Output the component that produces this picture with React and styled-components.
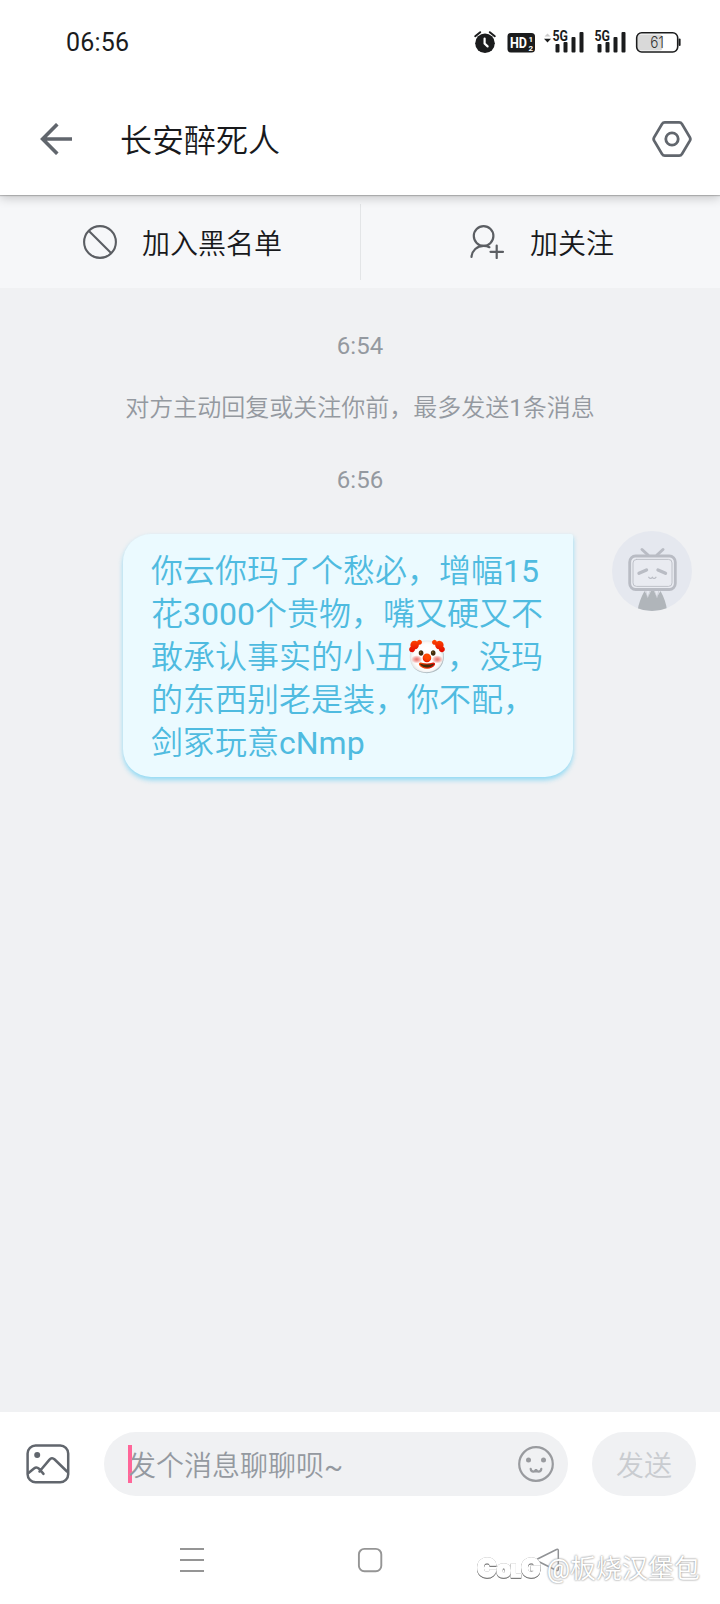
import React from 'react';
import styled, { createGlobalStyle } from 'styled-components';

const lines = [
  '你云你玛了个愁必，增幅15',
  '花3000个贵物，嘴又硬又不',
  '敢承认事实的小丑🤡，没玛',
  '的东西别老是装，你不配，',
  '剑冢玩意cNmp'
];

const StatusIcons = () => (
  <svg width='210' height='30' viewBox='0 0 210 30'>
    <g fill='#1b1c1d'>
      <circle cx='13' cy='17.3' r='9.8' />
      <path
        d='M3.2 10.2l5-4M22.8 10.2l-5-4'
        stroke='#1b1c1d'
        strokeWidth='2'
        strokeLinecap='round'
      />
      <path
        d='M12.6 12.6v5l3 2.8'
        stroke='#fff'
        strokeWidth='2.2'
        fill='none'
        strokeLinecap='round'
      />
      <rect x='35.5' y='7' width='27.5' height='19.5' rx='3.5' />
      <path d='M72.5 10.5l3-3 3 3z' fill='#ccc' />
      <path d='M72 12.8h7l-3.5 3.6z' />
      <rect x='83.5' y='18' width='4' height='8.5' rx='1' />
      <rect x='91.5' y='16' width='4' height='10.5' rx='1' />
      <rect x='99.5' y='11' width='4' height='15.5' rx='1' />
      <rect x='107.5' y='6' width='4' height='20.5' rx='1' />
      <rect x='125.5' y='18' width='4' height='8.5' rx='1' />
      <rect x='133.5' y='16' width='4' height='10.5' rx='1' />
      <rect x='141.5' y='11' width='4' height='15.5' rx='1' />
      <rect x='149.5' y='6' width='4' height='20.5' rx='1' />
      <rect x='206.6' y='12.4' width='2' height='7.5' rx='1' />
    </g>
    <rect x='165.5' y='8.5' width='25' height='16' rx='3' fill='#d9d9d9' />
    <rect
      x='164.7'
      y='6.8'
      width='41'
      height='19.2'
      rx='5'
      fill='none'
      stroke='#1b1c1d'
      strokeWidth='1.6'
    />
    <g fontFamily='Roboto' fontWeight='700'>
      <text
        x='38'
        y='22'
        fontSize='15.5'
        fill='#fff'
        textLength='17'
        lengthAdjust='spacingAndGlyphs'
      >
        HD
      </text>
      <text x='56.5' y='15.6' fontSize='8' fill='#fff'>
        1
      </text>
      <text x='56.5' y='25' fontSize='8' fill='#fff'>
        2
      </text>
      <text
        x='80.5'
        y='15'
        fontSize='14'
        fill='#1b1c1d'
        textLength='15.5'
        lengthAdjust='spacingAndGlyphs'
      >
        5G
      </text>
      <text
        x='122.5'
        y='15'
        fontSize='14'
        fill='#1b1c1d'
        textLength='15.5'
        lengthAdjust='spacingAndGlyphs'
      >
        5G
      </text>
    </g>
    <text
      x='185'
      y='21.8'
      fontSize='16'
      fontFamily='Inter'
      fontWeight='300'
      fill='#333'
      textAnchor='middle'
      textLength='13.5'
      lengthAdjust='spacingAndGlyphs'
    >
      61
    </text>
  </svg>
);

const BackIcon = () => (
  <svg width='32' height='32' viewBox='0 0 32 32'>
    <path
      d='M17.3 1.2L2.6 16l14.7 14.8M2.6 16H32'
      fill='none'
      stroke='#61666d'
      strokeWidth='3.6'
    />
  </svg>
);

const SettingsIcon = () => (
  <svg width='40' height='36' viewBox='0 0 40 36'>
    <g fill='none' stroke='#61666d' strokeWidth='2.8' strokeLinejoin='round'>
      <path d='M12.8 1.4h14.4q1.8 0 2.7 1.5l8 13.5q.9 1.6 0 3.2l-8 13.5q-.9 1.5-2.7 1.5H12.8q-1.8 0-2.7-1.5l-8-13.5q-.9-1.6 0-3.2l8-13.5q.9-1.5 2.7-1.5z' />
      <circle cx='20' cy='18' r='6.2' />
    </g>
  </svg>
);

const BlockIcon = () => (
  <svg width='34' height='34' viewBox='0 0 34 34'>
    <g fill='none' stroke='#5b5e63' strokeWidth='2.1'>
      <circle cx='17' cy='17' r='15.9' />
      <path d='M5.7 5.7l22.6 22.6' />
    </g>
  </svg>
);

const FollowIcon = () => (
  <svg width='34' height='34' viewBox='0 0 34 34'>
    <g fill='none' stroke='#5b5e63' strokeWidth='2.2' strokeLinecap='round'>
      <circle cx='13.6' cy='11' r='9.8' />
      <path d='M1.5 32C2 25.5 7 20.8 13.6 20.8c2.200 0 4.200.5 5.800 1.400' />
      <path d='M20.500 26.800h12.500M26.700 20.500v12.600' />
    </g>
  </svg>
);

const AvatarIcon = () => (
  <svg width='80' height='80' viewBox='0 0 80 80'>
    <defs>
      <clipPath id='face'>
        <circle cx='40' cy='40' r='40' />
      </clipPath>
    </defs>
    <g clipPath='url(#face)'>
      <rect width='80' height='80' fill='#e5e8ef' />
      <path
        d='M25.500 80c1-7 3.500-14 7-20l3.500 6 3-6h3l3 6 3.500-6c3.500 6 6 13 6.500 20z'
        fill='#b0b5ba'
      />
      <path
        d='M33.500 59l2 8 3-8zM42 59l3 8 2-8z'
        fill='#e5e8ef'
        stroke='#bfc3ca'
        strokeWidth='.6'
      />
    </g>
    <g fill='none' stroke='#b9bcc4' strokeLinecap='round'>
      <path d='M30 18.500l6 5.500M51 18.500l-6 5.500' strokeWidth='3' />
      <rect
        x='17.700'
        y='25'
        width='45.600'
        height='33.500'
        rx='6'
        strokeWidth='2.800'
        fill='#e9ebf1'
      />
      <rect
        x='21'
        y='28.400'
        width='39'
        height='27'
        rx='3.500'
        strokeWidth='.9'
      />
      <path d='M27 42.300l7.500-3.300M53.500 42.300L46 39' strokeWidth='3.400' />
      <path
        d='M36.800 46.300q1.800 2.200 3.500 0q1.800 2.200 3.600 0'
        strokeWidth='1.300'
      />
    </g>
  </svg>
);

const PictureIcon = () => (
  <svg width='44' height='40' viewBox='0 0 44 40'>
    <g fill='none' stroke='#61666d' strokeWidth='2.500' strokeLinecap='round'>
      <rect x='1.600' y='1.600' width='40.600' height='36.600' rx='8' />
      <path d='M2.500 29l5.500-4.500q2.500-2 5 .2l4.500 5.200M13.500 27.500l9.800-11.600q2.600-3 5.400-.4L41 27.500' />
    </g>
    <circle cx='11.200' cy='11' r='3' fill='#61666d' />
  </svg>
);

const SmileIcon = () => (
  <svg width='36' height='36' viewBox='0 0 36 36'>
    <g fill='none' stroke='#999b9f' strokeWidth='2.200' strokeLinecap='round'>
      <circle cx='18' cy='18' r='16.800' />
      <path d='M12.700 22.800q.3 2.800 2.700 2.800t2.600-2.500q.2 2.500 2.600 2.500t2.700-2.800' />
    </g>
    <circle cx='10.500' cy='14' r='2.500' fill='#999b9f' />
    <circle cx='25.500' cy='14' r='2.500' fill='#999b9f' />
  </svg>
);

const MenuKey = () => (
  <svg width='26' height='26' viewBox='0 0 26 26'>
    <path d='M1 2h24M1 13h24M1 24h24' stroke='#959595' strokeWidth='2' />
  </svg>
);

const HomeKey = () => (
  <svg width='26' height='26' viewBox='0 0 26 26'>
    <rect
      x='1.900'
      y='1.900'
      width='22.400'
      height='22.400'
      rx='5.500'
      fill='none'
      stroke='#959595'
      strokeWidth='1.900'
    />
  </svg>
);

const BackKey = () => (
  <svg width='26' height='26' viewBox='0 0 26 26'>
    <path
      d='M2.500 12Q1 13 2.500 14L21.500 23.500Q23.300 24 23.300 22.300V3.500Q23.300 1.800 21.500 2.500z'
      fill='none'
      stroke='#909295'
      strokeWidth='1.500'
    />
  </svg>
);

const App = () => {
  return (
    <Screen>
      <GlobalStyle />
      <StatusBar>
        <Clock>06:56</Clock>
        <StatusIcons />
      </StatusBar>
      <Header>
        <BackIcon />
        <Title>长安醉死人</Title>
        <SettingsIcon />
      </Header>
      <Actions>
        <Action $left={83} $gap={25}>
          <BlockIcon />
          <Label>加入黑名单</Label>
        </Action>
        <Action $left={109} $gap={26} $divided>
          <FollowIcon />
          <Label>加关注</Label>
        </Action>
      </Actions>
      <Chat>
        <Note $top={42}>6:54</Note>
        <Note $top={30}>对方主动回复或关注你前，最多发送1条消息</Note>
        <Note $top={40}>6:56</Note>
        <Message>
          <Bubble>
            {lines.map(line => (
              <Line key={line}>{line}</Line>
            ))}
          </Bubble>
          <AvatarIcon />
        </Message>
      </Chat>
      <InputBar>
        <PictureIcon />
        <Field>
          <Caret />
          <Placeholder>发个消息聊聊呗~</Placeholder>
          <SmileIcon />
        </Field>
        <SendButton>发送</SendButton>
      </InputBar>
      <NavBar>
        <MenuKey />
        <HomeKey />
        <BackKey />
      </NavBar>
      <Watermark>
        <Logo>
          <Letter $size={26}>C</Letter>
          <Letter $size={23}>o</Letter>
          <Letter $size={18}>L</Letter>
          <Letter $size={26}>G</Letter>
        </Logo>
        <Author>@板烧汉堡包</Author>
      </Watermark>
    </Screen>
  );
};

export default App;

const GlobalStyle = createGlobalStyle`
  body {
    margin: 0;
    background: #fff;
  }
  * {
    box-sizing: border-box;
  }
  svg {
    display: block;
    flex-shrink: 0;
  }
`;

const Screen = styled.div`
  position: relative;
  display: flex;
  flex-direction: column;
  width: 720px;
  height: 1604px;
  overflow: hidden;
  background: #fff;
  font-family: Roboto, 'Noto Sans CJK SC DemiLight', 'Noto Sans CJK SC',
    sans-serif;
  font-weight: 400;
  white-space: nowrap;
`;

const StatusBar = styled.div`
  display: flex;
  align-items: center;
  justify-content: space-between;
  height: 84px;
  padding: 0 38px 3px 66px;
`;

const Clock = styled.span`
  padding-top: 4px;
  font-size: 25px;
  letter-spacing: 0.2px;
  color: #1b1c1d;
`;

const Header = styled.header`
  position: relative;
  z-index: 1;
  display: flex;
  align-items: center;
  height: 111px;
  padding: 0 28px 1px 40px;
  background: #fff;
  box-shadow: 0 1px 1px rgba(0, 0, 0, 0.2), 0 3px 10px rgba(0, 0, 0, 0.2);
  clip-path: inset(0 0 -20px 0);
`;

const Title = styled.h1`
  flex: 1;
  margin: 0 0 0 48px;
  padding-top: 3px;
  font-size: 32px;
  font-weight: 400;
  line-height: 40px;
  color: #18191c;
`;

const Actions = styled.div`
  display: flex;
  align-items: center;
  height: 93px;
  background: #f6f7f9;
`;

const Action = styled.div`
  display: flex;
  align-items: center;
  gap: ${props => props.$gap}px;
  width: 360px;
  height: 76px;
  padding-left: ${props => props.$left}px;
  border-left: ${props => (props.$divided ? '1px solid #e3e5e7' : 'none')};
`;

const Label = styled.span`
  padding-top: 6px;
  font-size: 28px;
  line-height: 40px;
  color: #18191c;
`;

const Chat = styled.main`
  display: flex;
  flex: 1;
  flex-direction: column;
  background: #f0f1f3;
`;

const Note = styled.p`
  margin: ${props => props.$top}px 0 0;
  font-size: 24px;
  line-height: 32px;
  text-align: center;
  color: #9499a0;
`;

const Message = styled.div`
  display: flex;
  align-items: flex-start;
  justify-content: flex-end;
  gap: 39px;
  margin-top: 35px;
  padding-right: 28px;
`;

const Bubble = styled.div`
  width: 450px;
  height: 243px;
  margin-top: 3px;
  padding: 16px 0 0 28px;
  border-radius: 28px 2px 28px 28px;
  background: #ebfaff;
  box-shadow: 0 3px 5px rgba(92, 205, 245, 0.65);
`;

const Line = styled.div`
  height: 43px;
  font-size: 32px;
  line-height: 43px;
  color: #4fbbe0;
`;

const InputBar = styled.div`
  display: flex;
  align-items: center;
  height: 104px;
  padding: 0 24px 0 26px;
`;

const Field = styled.div`
  display: flex;
  align-items: center;
  width: 464px;
  height: 64px;
  margin: 0 24px 0 34px;
  padding: 0 14px 0 24px;
  border-radius: 32px;
  background: #f0f1f3;
`;

const Caret = styled.span`
  width: 4px;
  height: 38px;
  margin-right: -4px;
  background: #ff6699;
`;

const Placeholder = styled.span`
  flex: 1;
  padding-top: 5px;
  font-size: 28px;
  line-height: 40px;
  color: #9499a0;
`;

const SendButton = styled.button`
  width: 104px;
  height: 64px;
  padding: 0;
  border: none;
  border-radius: 32px;
  background: #f0f1f3;
  font-family: inherit;
  font-size: 28px;
  color: #c9ccd0;
`;

const NavBar = styled.nav`
  display: flex;
  align-items: center;
  gap: 152px;
  height: 88px;
  padding-left: 179px;
`;

const Watermark = styled.div`
  position: absolute;
  right: 20px;
  bottom: 17px;
  display: flex;
  align-items: center;
  gap: 6px;
  height: 40px;
  color: #fff;
`;

const Logo = styled.span`
  display: flex;
  align-items: baseline;
  padding-top: 4px;
  filter: drop-shadow(0 0 0.6px #888) drop-shadow(0 1px 0.5px #777);
`;

const Letter = styled.span`
  font-family: Inter, sans-serif;
  font-size: ${props => props.$size}px;
  font-weight: 900;
  line-height: 30px;
  -webkit-text-stroke: 1.5px #fff;
`;

const Author = styled.span`
  font-size: 26px;
  padding-bottom: 2px;
  text-shadow: 0 0 2px #999, 0 0 2px #aaa;
`;
